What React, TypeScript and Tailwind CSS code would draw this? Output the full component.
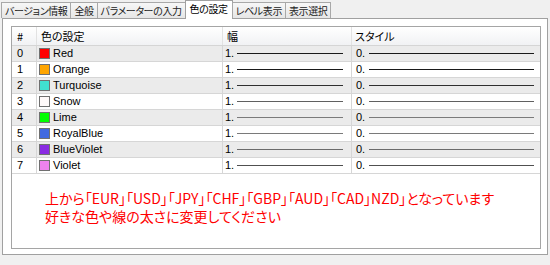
import React from "react"

const tabs = ["バージョン情報", "全般", "パラメーターの入力", "色の設定", "レベル表示", "表示選択"]

const rows = [
  { name: "Red", color: "#ff0000", line: "bg-[#1a1a1a]" },
  { name: "Orange", color: "#ffa500", line: "bg-[#1a1a1a]" },
  { name: "Turquoise", color: "#40e0d0", line: "bg-[#303030]" },
  { name: "Snow", color: "#fffafa", line: "bg-[#606060]" },
  { name: "Lime", color: "#00ff00", line: "bg-[#7a7a7a]" },
  { name: "RoyalBlue", color: "#4169e1", line: "bg-[#7a7a7a]" },
  { name: "BlueViolet", color: "#8a2be2", line: "bg-[#6a6a6a]" },
  { name: "Violet", color: "#ee82ee", line: "bg-[#505050]" },
]

const jp = { fontFamily: '"Noto Sans CJK JP", "Liberation Sans", sans-serif', fontFeatureSettings: '"palt"' }
const ui = { fontFamily: '"Liberation Sans", "Noto Sans CJK JP", sans-serif' }

export default function App() {
  return (
    <div className="w-[550px] h-[265px] bg-[#f0f0f0] overflow-hidden text-[11px] text-black" style={ui}>
      {/* tabs */}
      <div
        className="flex items-end h-[18px] pl-[1px] relative z-10 whitespace-nowrap text-[10px] tracking-[-0.4px]"
        style={jp}
      >
        {tabs.map((t) =>
          t === "色の設定" ? (
            <div
              key={t}
              className="h-[19px] -mb-px -ml-px px-[4px] bg-white border border-b-0 border-[#a0a0a0] flex items-start pt-[1px] leading-[14px]"
            >
              {t}
            </div>
          ) : (
            <div
              key={t}
              className="h-[16px] px-[3px] bg-gradient-to-b from-[#f7f7f7] to-[#e6e6e6] border border-b-0 border-[#a8a8a8] -ml-px first:ml-0 flex items-center leading-[14px] text-[#222]"
            >
              {t}
            </div>
          )
        )}
      </div>

      {/* panel */}
      <div className="mx-[2px] h-[237px] bg-white border border-[#a0a0a0] pt-[7px] pl-[8px] pr-[6px]">
        <div className="h-[223px] border border-[#a5a5a5] bg-white flex flex-col">
          {/* header */}
          <div
            className="flex h-[19px] bg-gradient-to-b from-white to-[#f1f2f4] border-b border-[#d5d5d5] items-center"
            style={jp}
          >
            <div className="w-[25px] pl-[5px] border-r border-[#e2e2e2] h-full flex items-center">#</div>
            <div className="w-[186px] pl-[4px] border-r border-[#e2e2e2] h-full flex items-center">色の設定</div>
            <div className="w-[129px] pl-[4px] border-r border-[#e2e2e2] h-full flex items-center">幅</div>
            <div className="flex-1 pl-[3px] h-full flex items-center">スタイル</div>
          </div>

          {rows.map((r, i) => (
            <div
              key={r.name}
              className={`flex h-[16px] border-b border-[#d6d6d6] items-center ${i % 2 === 0 ? "bg-[#ebebeb]" : "bg-white"}`}
            >
              <div className="w-[25px] pl-[5px] border-r border-[#d6d6d6] h-full flex items-center">{i}</div>
              <div className="w-[186px] pl-[2px] border-r border-[#d6d6d6] h-full flex items-center gap-[3px]">
                <span
                  className="w-[11px] h-[11px] border border-[#707070] inline-block"
                  style={{ backgroundColor: r.color }}
                />
                <span>{r.name}</span>
              </div>
              <div className="w-[129px] pl-[2px] pr-[8px] border-r border-[#d6d6d6] h-full flex items-center gap-[3px]">
                <span>1.</span>
                <span className={`flex-1 h-px ${r.line}`} />
              </div>
              <div className="flex-1 pl-[4px] pr-[6px] h-full flex items-center gap-[4px]">
                <span>0.</span>
                <span className={`flex-1 h-px ${r.line}`} />
              </div>
            </div>
          ))}

          <div className="pl-[33px] pt-[15px] text-[14px] leading-[18px] text-[#ff0000] whitespace-nowrap" style={jp}>
            <div>上から「EUR」「USD」「JPY」「CHF」「GBP」「AUD」「CAD」NZD」となっています</div>
            <div>好きな色や線の太さに変更してください</div>
          </div>
        </div>
      </div>
    </div>
  )
}
